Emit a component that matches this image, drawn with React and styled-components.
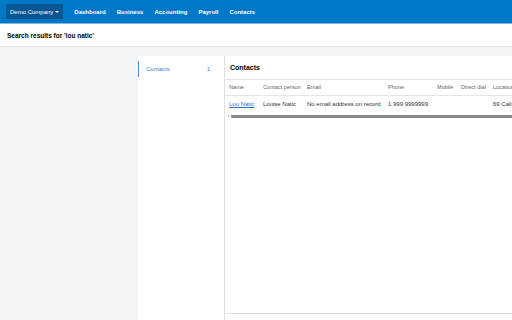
import React from "react";
import styled, { createGlobalStyle } from "styled-components";

const Global = createGlobalStyle`
  html, body { margin: 0; padding: 0; }
  body {
    font-family: "Liberation Sans", Arial, sans-serif;
    background: #f2f3f5;
    width: 512px;
    height: 320px;
    overflow: hidden;
  }
`;

const Page = styled.div`
  display: flex;
  flex-direction: column;
  height: 320px;
`;

const TopBar = styled.header`
  height: 23px;
  background: #0078c8;
  border-bottom: 1px solid #7fb6e6;
  display: flex;
  align-items: center;
  padding-left: 6px;
  gap: 11px;
`;

const OrgButton = styled.button`
  height: 15px;
  padding: 0 4px;
  border: 0;
  border-radius: 1px;
  background: #0a5694;
  color: #fff;
  font-family: inherit;
  font-size: 6px;
  display: flex;
  align-items: center;
  gap: 2px;
`;

const Caret = styled.span`
  width: 0;
  height: 0;
  border-left: 2px solid transparent;
  border-right: 2px solid transparent;
  border-top: 2px solid #fff;
`;

const NavLink = styled.a`
  color: #fff;
  font-size: 6px;
  font-weight: bold;
  text-decoration: none;
`;

const TitleStrip = styled.div`
  height: 22px;
  background: #fff;
  border-bottom: 1px solid #e4e5e7;
  display: flex;
  align-items: center;
  padding-left: 7px;
  font-size: 6.5px;
  font-weight: bold;
  color: #000;
`;

const Body = styled.div`
  flex: 1;
  display: flex;
  padding: 9px 0 0 138px;
  min-height: 0;
`;

const Side = styled.nav`
  width: 86px;
  flex-shrink: 0;
  background: #fff;
  padding-top: 5px;
`;

const SideItem = styled.div`
  height: 16px;
  display: flex;
  align-items: center;
  justify-content: space-between;
  padding: 0 14px 0 7px;
  border-left: 1px solid ${(p) => (p.$active ? "#4a8fd8" : "transparent")};
  color: #3a7fd0;
  font-size: 6px;
`;

const Main = styled.section`
  flex: 1;
  min-width: 0;
  background: #fff;
  border-left: 1px solid #dfe0e2;
  display: flex;
  flex-direction: column;
`;

const MainHead = styled.h2`
  margin: 0;
  height: 23px;
  display: flex;
  align-items: center;
  padding-left: 5px;
  font-size: 7px;
  font-weight: bold;
  color: #000;
  border-bottom: 1px solid #e4e5e7;
`;

const Scroller = styled.div`
  overflow: hidden;
  white-space: nowrap;
`;

const Table = styled.table`
  border-collapse: collapse;
  font-size: 6px;
  color: #333;
`;

const Th = styled.th`
  width: ${(p) => p.$w}px;
  min-width: ${(p) => p.$w}px;
  height: 15px;
  padding: 0 0 0 4px;
  text-align: left;
  font-weight: normal;
  font-size: 5.6px;
  color: #666;
  border-bottom: 1px solid #e4e5e7;
  box-sizing: border-box;
`;

const Td = styled.td`
  height: 18px;
  padding: 0 0 0 4px;
  text-align: left;
  box-sizing: border-box;
`;

const Link = styled.a`
  color: #2a6fc9;
  text-decoration: underline;
`;

const ScrollTrack = styled.div`
  display: flex;
  align-items: center;
  height: 6px;
  gap: 2px;
  padding-left: 3px;
`;

const ScrollArrow = styled.span`
  width: 0;
  height: 0;
  border-top: 1.5px solid transparent;
  border-bottom: 1.5px solid transparent;
  border-right: 1.5px solid #666;
`;

const ScrollThumb = styled.div`
  flex: 1;
  height: 3px;
  background: #8a8a8a;
  border-radius: 1px 0 0 1px;
`;

const Spacer = styled.div`
  flex: 1;
`;

const Footer = styled.div`
  height: 6px;
  border-top: 1px solid #e0e0e0;
`;

const columns = [
  ["Name", 34],
  ["Contact person", 44],
  ["Email", 81],
  ["Phone", 49],
  ["Mobile", 24],
  ["Direct dial", 32],
  ["Location", 60],
];

export default function App() {
  return (
    <Page>
      <Global />
      <TopBar>
        <OrgButton>
          Demo Company <Caret />
        </OrgButton>
        {["Dashboard", "Business", "Accounting", "Payroll", "Contacts"].map((n) => (
          <NavLink key={n}>{n}</NavLink>
        ))}
      </TopBar>
      <TitleStrip>Search results for 'lou natic'</TitleStrip>
      <Body>
        <Side>
          <SideItem $active>
            <span>Contacts</span>
            <span>1</span>
          </SideItem>
        </Side>
        <Main>
          <MainHead>Contacts</MainHead>
          <Scroller>
            <Table>
              <thead>
                <tr>
                  {columns.map(([n, w]) => (
                    <Th key={n} $w={w}>
                      {n}
                    </Th>
                  ))}
                </tr>
              </thead>
              <tbody>
                <tr>
                  <Td>
                    <Link>Lou Natic</Link>
                  </Td>
                  <Td>Louise Natic</Td>
                  <Td>No email address on record</Td>
                  <Td>1 999 9999999</Td>
                  <Td />
                  <Td />
                  <Td>69 California St</Td>
                </tr>
              </tbody>
            </Table>
          </Scroller>
          <ScrollTrack>
            <ScrollArrow />
            <ScrollThumb />
          </ScrollTrack>
          <Spacer />
          <Footer />
        </Main>
      </Body>
    </Page>
  );
}
